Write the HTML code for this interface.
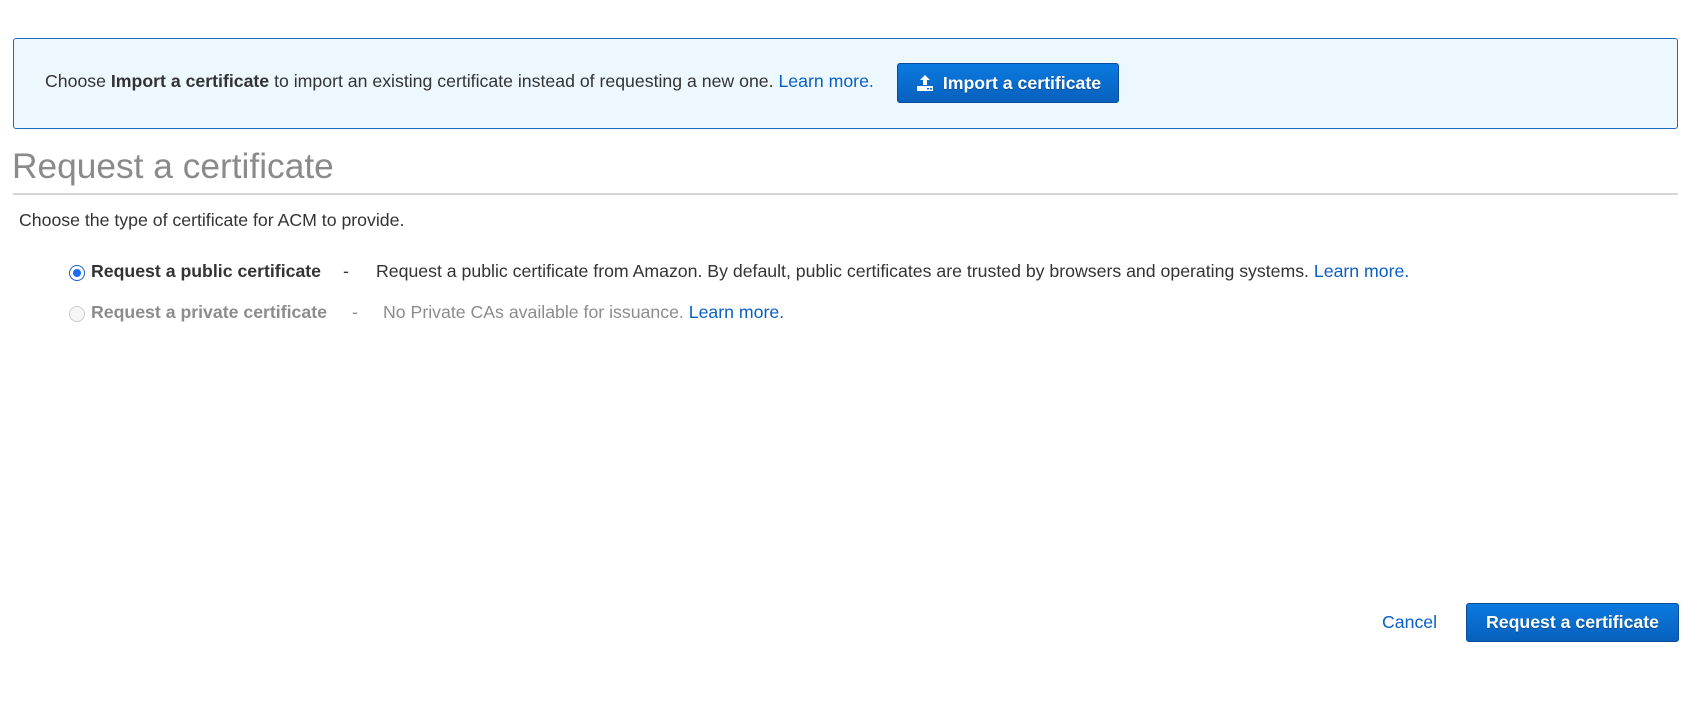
<!DOCTYPE html>
<html><head><style>
body{margin:0;width:1704px;height:725px;background:#fff;font-family:"Liberation Sans",Arial,sans-serif;color:#333;position:relative;overflow:hidden}
.abs{position:absolute;white-space:nowrap}
a{color:#0a5fc4;text-decoration:none}
.panel{position:absolute;left:13px;top:38px;width:1663px;height:89px;background:#edf7fe;border:1px solid #1f6bc1;border-radius:3px}
.btn{position:absolute;background:linear-gradient(#0b7ae0,#0760bd);border:1px solid #0a4c98;border-radius:3px;color:#fff;font-weight:bold;font-size:17.7px;display:flex;align-items:center;justify-content:center;box-sizing:border-box;text-shadow:0 1px 1px rgba(0,0,0,.3)}
.radio{position:absolute;width:16px;height:16px;border-radius:50%;box-sizing:border-box}
.t{font-size:17.7px}
</style></head><body>
<div class="panel"></div>
<div class="abs t" style="left:45px;top:71px">Choose <b>Import a certificate</b> to import an existing certificate instead of requesting a new one. <a>Learn more.</a></div>
<div class="btn" style="left:897px;top:63px;width:222px;height:40px">
<svg width="20" height="18" viewBox="0 0 20 18" style="margin-right:8px"><path d="M10 1 L5 6 H8 V11 H12 V6 H15 Z" fill="#fff"/><rect x="2" y="12" width="16" height="5" fill="#fff"/><rect x="12" y="14" width="2" height="1.5" fill="#0868c8"/><rect x="15" y="14" width="2" height="1.5" fill="#0868c8"/></svg>Import a certificate</div>
<div class="abs" style="left:12px;top:147px;font-size:35.3px;color:#8a8a8a">Request a certificate</div>
<div style="position:absolute;left:13px;top:193px;width:1665px;height:2px;background:#d5d5d5"></div>
<div class="abs t" style="left:19px;top:210px">Choose the type of certificate for ACM to provide.</div>
<div class="radio" style="left:69px;top:265px;border:1px solid #1a5fd6;background:#fff"><div style="position:absolute;left:3px;top:3px;width:8px;height:8px;border-radius:50%;background:#1a6ef5"></div></div>
<div class="abs t" style="left:91px;top:261px"><b>Request a public certificate</b></div>
<div class="abs t" style="left:343px;top:261px">-</div>
<div class="abs t" style="left:376px;top:261px">Request a public certificate from Amazon. By default, public certificates are trusted by browsers and operating systems. <a>Learn more.</a></div>
<div class="radio" style="left:69px;top:306px;border:1px solid #ccc;background:#f6f6f6"></div>
<div class="abs t" style="left:91px;top:302px;color:#8c8c8c"><b>Request a private certificate</b></div>
<div class="abs t" style="left:352px;top:302px;color:#8c8c8c">-</div>
<div class="abs t" style="left:383px;top:302px;color:#8c8c8c">No Private CAs available for issuance. <a>Learn more.</a></div>
<div class="abs t" style="left:1382px;top:612px"><a>Cancel</a></div>
<div class="btn" style="left:1466px;top:603px;width:213px;height:39px">Request a certificate</div>
</body></html>
